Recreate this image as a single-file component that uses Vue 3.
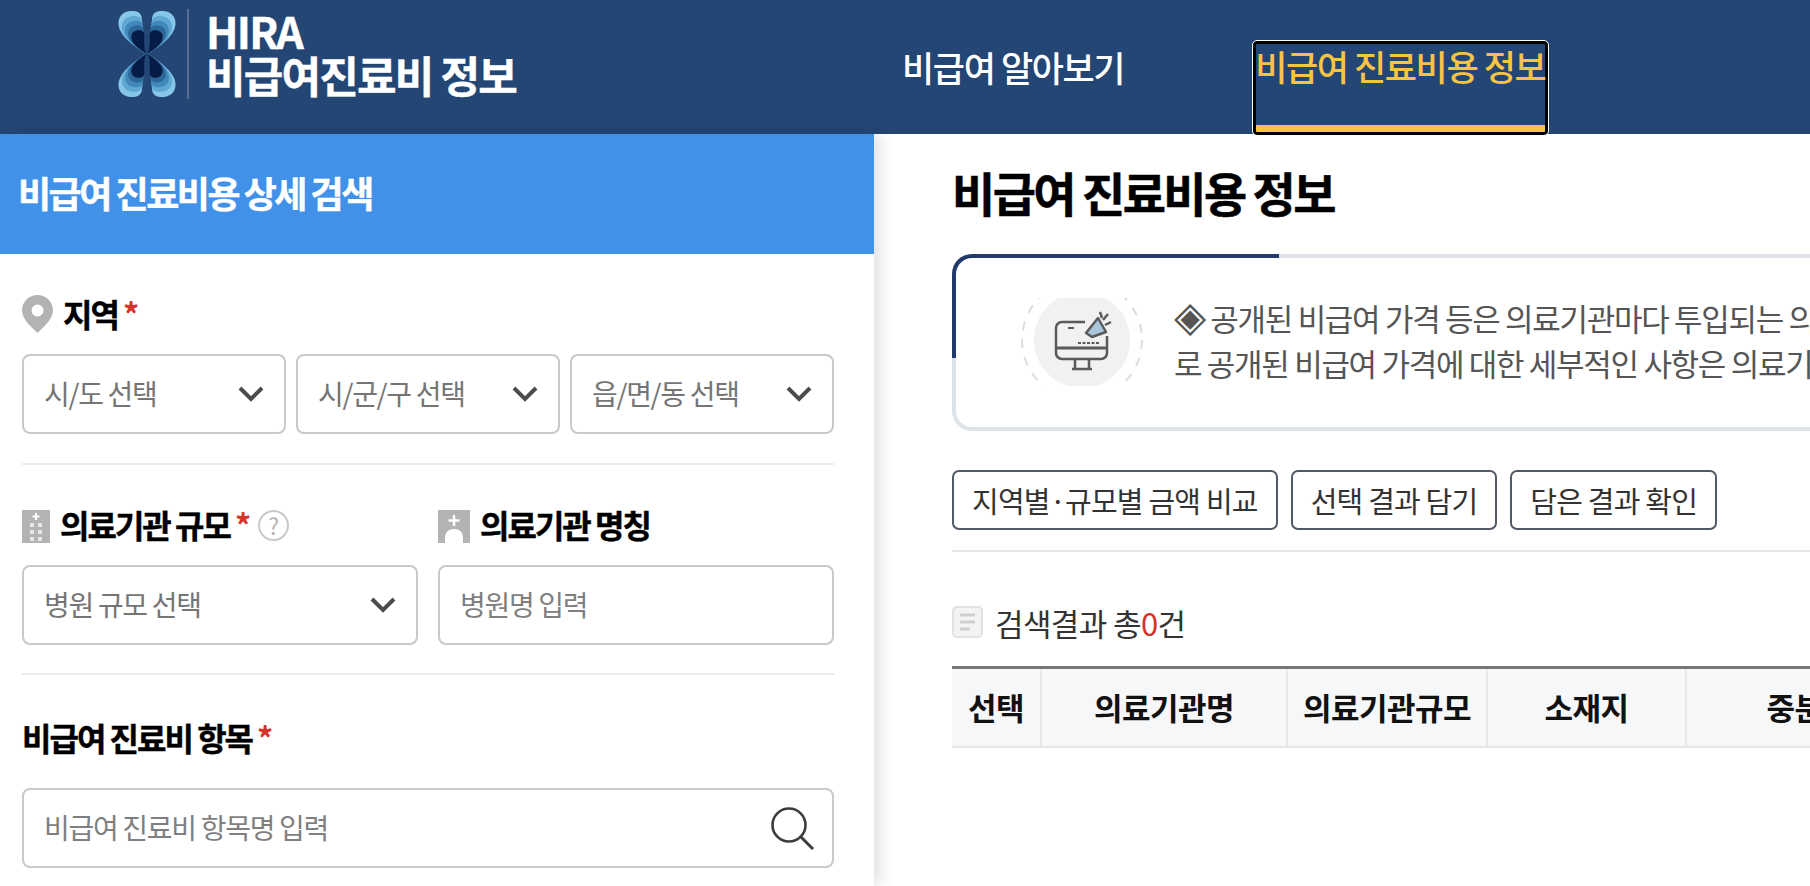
<script setup>
const lobes = [
  { s: 1, c: '#86c6e6' },
  { s: 0.88, c: '#5fa8d4' },
  { s: 0.77, c: '#4189bb' },
  { s: 0.66, c: '#2c6798' },
  { s: 0.55, c: '#061b45' }
]
const flips = ['scale(1 1)', 'scale(-1 1)', 'scale(1 -1)', 'scale(-1 -1)']
const regionSelects = ['시/도 선택', '시/군/구 선택', '읍/면/동 선택']
const actions = ['지역별·규모별 금액 비교', '선택 결과 담기', '담은 결과 확인']
const columns = [
  { label: '선택', width: 90 },
  { label: '의료기관명', width: 246 },
  { label: '의료기관규모', width: 200 },
  { label: '소재지', width: 199 },
  { label: '중분류', width: 245 }
]
</script>

<template>
  <div class="page">
    <header class="topbar">
      <div class="brand">
        <svg class="logo" viewBox="-30 -43 60 86" aria-hidden="true">
          <g v-for="f in flips" :key="f" :transform="f">
            <path
              v-for="l in lobes"
              :key="l.s"
              :transform="`scale(${l.s})`"
              :fill="l.c"
              d="M-1 0C-8-5-22-13-27-24-31-33-27-42-17-43-9-43.500-5-41-5-34-5-22-6-10-1 0Z"
            />
          </g>
        </svg>
        <span class="brand-rule"></span>
        <div class="brand-text"><div>HIRA</div><div>비급여진료비 정보</div></div>
      </div>
      <nav class="nav">
        <a class="nav-item">비급여 알아보기</a>
        <a class="nav-item active">비급여 진료비용 정보</a>
      </nav>
    </header>

    <div class="content">
      <aside class="side">
        <h2 class="side-title">비급여 진료비용 상세 검색</h2>
        <div class="form">
          <section class="group">
            <div class="label">
              <svg class="ico-pin" viewBox="0 0 31 38" aria-hidden="true">
                <path fill-rule="evenodd" fill="#b3b3b3" d="M15.500 0C7 0 0 6.800 0 15.200 0 25 11 33 15.500 38 20 33 31 25 31 15.200 31 6.800 24 0 15.500 0ZM15.500 9.500A6 6 0 1 1 15.500 21.500 6 6 0 0 1 15.500 9.500Z"/>
              </svg>
              <span class="text">지역</span><i class="req">*</i>
            </div>
            <div class="row three">
              <div v-for="s in regionSelects" :key="s" class="select-wrap">
                <select class="field"><option>{{ s }}</option></select>
                <svg class="chev" viewBox="0 0 28 18" aria-hidden="true"><path d="M3 3l11 11L25 3" fill="none" stroke="#4c4c4c" stroke-width="4"/></svg>
              </div>
            </div>
          </section>

          <section class="group cols">
            <div class="col">
              <div class="label">
                <svg class="ico-sq" viewBox="0 0 28 33" aria-hidden="true">
                  <rect width="28" height="33" fill="#b3b3b3"/>
                  <path d="M14 3v7M10.500 6.500h7" stroke="#fff" stroke-width="2"/>
                  <g fill="#e6e6e6">
                    <rect x="8" y="13" width="4" height="4"/><rect x="16" y="13" width="4" height="4"/>
                    <rect x="8" y="20" width="4" height="4"/><rect x="16" y="20" width="4" height="4"/>
                    <rect x="8" y="27" width="4" height="4"/><rect x="16" y="27" width="4" height="4"/>
                  </g>
                </svg>
                <span class="text">의료기관 규모</span><i class="req">*</i>
                <span class="help">?</span>
              </div>
              <div class="select-wrap">
                <select class="field"><option>병원 규모 선택</option></select>
                <svg class="chev" viewBox="0 0 28 18" aria-hidden="true"><path d="M3 3l11 11L25 3" fill="none" stroke="#4c4c4c" stroke-width="4"/></svg>
              </div>
            </div>
            <div class="col">
              <div class="label">
                <svg class="ico-sq wide" viewBox="0 0 32 33" aria-hidden="true">
                  <rect width="32" height="33" fill="#b3b3b3"/>
                  <path d="M16 5v11M10.500 10.500h11" stroke="#fff" stroke-width="2.500"/>
                  <path fill="#fff" d="M7 33V28C7 22 11 19 16 19S25 22 25 28V33Z"/>
                </svg>
                <span class="text">의료기관 명칭</span>
              </div>
              <input class="field" placeholder="병원명 입력" />
            </div>
          </section>

          <section class="group last">
            <div class="label plain"><span class="text">비급여 진료비 항목</span><i class="req">*</i></div>
            <div class="select-wrap">
              <input class="field" placeholder="비급여 진료비 항목명 입력" />
              <svg class="search" viewBox="0 0 44 44" aria-hidden="true">
                <circle cx="19" cy="19" r="16.500" fill="none" stroke="#3c3c3c" stroke-width="2.600"/>
                <path d="M31 31l12 12" stroke="#3c3c3c" stroke-width="3"/>
              </svg>
            </div>
          </section>
        </div>
      </aside>

      <main class="main">
        <h1 class="main-title">비급여 진료비용 정보</h1>

        <div class="notice">
          <div class="notice-icon">
            <svg viewBox="0 0 124 88" width="124" height="88" aria-hidden="true">
              <circle cx="62" cy="42" r="60" fill="none" stroke="#dcdce2" stroke-width="2" stroke-dasharray="9 9"/>
              <circle cx="62" cy="42" r="48" fill="#f1f1f1"/>
              <g fill="none" stroke="#5a5a5a" stroke-width="2.500">
                <path d="M65 24H42a6 6 0 0 0-6 6v25a6 6 0 0 0 6 6h39a6 6 0 0 0 6-6V38"/>
                <path d="M36 50H87" stroke-width="3"/>
                <path d="M55 61v9M69 61v9M52 71H72"/>
                <path d="M48 30h6" stroke-width="2"/>
                <path d="M58 45H80" stroke-width="2" stroke-dasharray="3 1.500"/>
                <path d="M80 14l2 6M91 24l-6 3M88 16l-5 6"/>
              </g>
              <path d="M66 35L78 20 86 34 72 39Z" fill="#a9c6dd" stroke="#5a5a5a" stroke-width="2.500" stroke-linejoin="round"/>
            </svg>
          </div>
          <div class="notice-text">
            <p><span class="diamond">◈</span> 공개된 비급여 가격 등은 의료기관마다 투입되는 의료 인력과 장비</p>
            <p>로 공개된 비급여 가격에 대한 세부적인 사항은 의료기관에 문의</p>
          </div>
        </div>

        <div class="actions">
          <button v-for="a in actions" :key="a" class="btn" type="button">{{ a }}</button>
        </div>

        <div class="result">
          <svg class="ico-doc" viewBox="0 0 31 32" aria-hidden="true">
            <rect x="1" y="1" width="29" height="30" rx="4" fill="#f3f3f3" stroke="#e2e2e2" stroke-width="2"/>
            <path d="M8 9H23M8 16H23M8 23H18" stroke="#cfcfcf" stroke-width="3"/>
          </svg>
          <span>검색결과 총<b>0</b>건</span>
        </div>

        <div class="thead">
          <div v-for="c in columns" :key="c.label" class="th" :style="{ width: c.width + 'px' }">{{ c.label }}</div>
        </div>
      </main>
    </div>
  </div>
</template>

<style>
html, body { margin: 0; height: 100%; overflow: hidden; background: #fff; }
</style>

<style scoped>
.page {
  width: 1810px;
  height: 886px;
  overflow: hidden;
  display: flex;
  flex-direction: column;
  font-family: "Noto Sans CJK KR", "Noto Sans", sans-serif;
  color: #000;
}
.topbar {
  height: 134px;
  flex: none;
  background: #234675;
  display: flex;
  align-items: flex-start;
  color: #fff;
}
.brand { display: flex; margin-left: 117px; padding-top: 9px; }
.logo { width: 60px; height: 86px; margin-top: 2px; }
.brand-rule { width: 2px; height: 90px; background: #566f96; margin: 0 17px 0 10px; }
.brand-text {
  font-size: 43px;
  font-weight: 700;
  line-height: 44px;
  letter-spacing: -1.800px;
  margin-top: -1px;
  -webkit-text-stroke: .4px #fff;
}
.nav { display: flex; margin-left: 386px; padding-top: 42px; }
.nav-item {
  display: block;
  height: 94px;
  box-sizing: border-box;
  font-size: 35px;
  font-weight: 500;
  line-height: 44px;
  letter-spacing: -1.400px;
  color: #fff;
  margin-right: 129px;
  margin-top: 3px;
}
.nav-item.active {
  color: #f9c344;
  margin: 0;
  margin-top: -1px;
  padding: 0;
  text-indent: -1px;
  border: 3px solid #000;
  border-radius: 4px;
  outline: 1px solid #fff;
  position: relative;
  background: linear-gradient(#f9c344, #f9c344) left bottom / 100% 7px no-repeat;
}
.content { flex: 1; display: flex; min-height: 0; }
.side {
  width: 874px;
  flex: none;
  box-shadow: 6px 0 14px rgba(0, 0, 0, .12);
  position: relative;
  background: #fff;
}
.side-title {
  margin: 0;
  height: 120px;
  background: #4191e8;
  color: #fff;
  font-size: 36px;
  font-weight: 700;
  letter-spacing: -2.500px;
  line-height: 116px;
  padding-left: 18px;
  -webkit-text-stroke: .4px #fff;
}
.form { padding: 0 40px 0 22px; }
.group { border-bottom: 2px solid #ebebeb; }
.group:first-child { padding-top: 39px; padding-bottom: 29px; }
.group.cols { display: flex; gap: 20px; padding-top: 39px; padding-bottom: 28px; }
.group.last { border: 0; padding-top: 42px; }
.col { flex: 1; min-width: 0; }
.label {
  display: flex;
  align-items: center;
  height: 42px;
  font-size: 32px;
  font-weight: 700;
  letter-spacing: -2px;
  margin-bottom: 19px;
}
.label .text { margin-top: -2px; -webkit-text-stroke: .4px #000; }
.label.plain { margin-bottom: 29px; }
.ico-pin { width: 31px; height: 38px; margin-right: 10px; }
.ico-sq { width: 28px; height: 33px; margin-right: 10px; margin-top: 2px; }
.ico-sq.wide { width: 32px; }
.req { font-style: normal; color: #d5342b; margin-left: 5px; margin-top: -3px; font-weight: 700; }
.help {
  width: 31px;
  height: 31px;
  box-sizing: border-box;
  border: 2px solid #c9c9c9;
  border-radius: 50%;
  color: #b5b5b5;
  font-size: 23px;
  font-weight: 400;
  letter-spacing: 0;
  line-height: 26px;
  text-align: center;
  margin-left: 9px;
}
.row.three { display: grid; grid-template-columns: repeat(3, 1fr); gap: 10px; }
.select-wrap { position: relative; }
.field {
  display: block;
  width: 100%;
  height: 80px;
  box-sizing: border-box;
  border: 2px solid #c8c8cd;
  border-radius: 8px;
  background: #fff;
  padding: 0 20px 3px;
  font: 400 28px "Noto Sans CJK KR", "Noto Sans", sans-serif;
  letter-spacing: -1.300px;
  color: #757575;
  appearance: none;
  outline: none;
}
.field::placeholder { color: #7f7f7f; opacity: 1; }
.chev { position: absolute; right: 21px; top: 31px; width: 28px; height: 18px; pointer-events: none; }
.search { position: absolute; right: 20px; top: 18px; width: 44px; height: 44px; }
.main { flex: 1; min-width: 0; padding-left: 78px; overflow: hidden; background: #fff; }
.main-title {
  margin: 0;
  height: 120px;
  font-size: 47px;
  font-weight: 700;
  letter-spacing: -2.600px;
  line-height: 116px;
  -webkit-text-stroke: .5px #000;
}
.notice {
  position: relative;
  width: 1000px;
  height: 177px;
  box-sizing: border-box;
  border: 4px solid #dde3e8;
  border-radius: 20px;
  display: flex;
  align-items: center;
  background: #fff;
}
.notice::before {
  content: "";
  position: absolute;
  left: -4px;
  top: -4px;
  width: 323px;
  height: 100px;
  border: solid #1f3a6b;
  border-width: 4px 0 0 4px;
  border-top-left-radius: 20px;
}
.notice-icon { margin-left: 64px; margin-top: -2px; width: 124px; height: 88px; flex: none; display: flex; overflow: hidden; }
.notice-text {
  margin-left: 30px;
  width: 640px;
  overflow: hidden;
  font-size: 31px;
  line-height: 45px;
  letter-spacing: -1.300px;
  color: #555;
  white-space: nowrap;
  margin-top: -6px;
}
.notice-text p { margin: 0; }
.diamond { font-size: 1.350em; line-height: 0; }
.actions {
  display: flex;
  gap: 13px;
  padding: 39px 0 20px;
  border-bottom: 2px solid #e6e6e6;
}
.btn {
  height: 60px;
  padding: 0 18px;
  box-sizing: border-box;
  border: 2px solid #525a68;
  border-radius: 7px;
  background: #fff;
  font: 400 29px "Noto Sans CJK KR", "Noto Sans", sans-serif;
  letter-spacing: -.800px;
  color: #333;
}
.result {
  display: flex;
  align-items: center;
  gap: 12px;
  height: 34px;
  margin-top: 53px;
  font-size: 31px;
  letter-spacing: -.600px;
  color: #333;
}
.result b { color: #d5342b; font-weight: 400; }
.ico-doc { width: 31px; height: 32px; }
.thead {
  display: flex;
  margin-top: 27px;
  border-top: 3px solid #777;
  border-bottom: 2px solid #e6e6e6;
  background: #f5f7f9;
  width: 1000px;
}
.th {
  flex: none;
  box-sizing: border-box;
  height: 77px;
  line-height: 75px;
  text-align: center;
  font-size: 31px;
  font-weight: 700;
  letter-spacing: -.500px;
  color: #111;
  border-right: 2px solid #e6e8ea;
}
</style>
